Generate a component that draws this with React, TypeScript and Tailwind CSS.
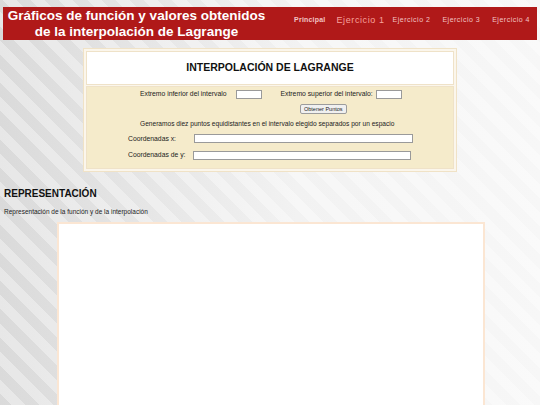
import React from "react";

export default function App() {
  return (
    <div className="w-[540px] min-h-[405px] overflow-hidden font-['Liberation_Sans',Arial,sans-serif] bg-[image:repeating-linear-gradient(45deg,rgba(255,255,255,0.35)_0_10px,transparent_10px_20px),linear-gradient(to_right,#dadada,#f2f2f2_55%,#f7f7f7)] pt-[7px] whitespace-nowrap">
      <header className="mx-[3px] h-[33px] bg-[#b01919] flex justify-between">
        <div className="w-[267px] flex-none text-center text-white font-bold text-[13.5px] leading-[16px] pt-[1px]">
          <div>Gráficos de función y valores obtenidos</div>
          <div>de la interpolación de Lagrange</div>
        </div>
        <nav className="flex items-start pt-[7px] pr-[7px]">
          <span className="text-[7px] leading-[10px] font-bold text-[#f2c4c4] mt-[1px] tracking-[0.2px]">Principal</span>
          <span className="text-[9px] leading-[12px] text-[#f8a39b] ml-[11px] tracking-[0.6px]">Ejercicio 1</span>
          <span className="text-[7px] leading-[10px] text-[#f2c4c4] ml-[8px] mt-[1px] tracking-[0.5px]">Ejercicio 2</span>
          <span className="text-[7px] leading-[10px] text-[#f2c4c4] ml-[12px] mt-[1px] tracking-[0.5px]">Ejercicio 3</span>
          <span className="text-[7px] leading-[10px] text-[#f2c4c4] ml-[12px] mt-[1px] tracking-[0.5px]">Ejercicio 4</span>
        </nav>
      </header>

      <section className="mx-auto mt-[8px] w-[374px] border border-[#f0e2c6] bg-[#fbf6ec] p-[2px]">
        <div className="h-[34px] bg-white border border-[#efe2c8] flex items-center justify-center">
          <h1 className="text-[10.5px] font-bold text-[#111]">INTERPOLACIÓN DE LAGRANGE</h1>
        </div>
        <div className="mt-[1px] bg-[#f5ebcb] border border-[#efe2c8] pb-[8px] text-[6.8px] text-[#222]">
          <div className="flex items-center pt-[2px] h-[13px]">
            <span className="ml-[53px]">Extremo inferior del intervalo</span>
            <span className="ml-[9px] inline-block w-[26px] h-[9px] bg-white border border-[#9a9a9a]"></span>
            <span className="ml-[19px]">Extremo superior del intervalo:</span>
            <span className="ml-[3px] inline-block w-[26px] h-[9px] bg-white border border-[#9a9a9a]"></span>
          </div>
          <div className="flex mt-[4px]">
            <button className="ml-[213px] h-[10px] px-[3px] bg-[#f0f0f0] border border-[#9c9c9c] rounded-[2px] text-[5.5px] leading-[8px] text-[#222]">
              Obtener Puntos
            </button>
          </div>
          <div className="mt-[5px] ml-[53px] text-[6.6px]">Generamos diez puntos equidistantes en el intervalo elegido separados por un espacio</div>
          <div className="flex items-center mt-[5px]">
            <span className="ml-[41px] w-[66px]">Coordenadas x:</span>
            <span className="inline-block w-[219px] h-[9px] bg-white border border-[#9a9a9a]"></span>
          </div>
          <div className="flex items-center mt-[6px]">
            <span className="ml-[41px] w-[65px]">Coordenadas de y:</span>
            <span className="inline-block w-[218px] h-[9px] bg-white border border-[#9a9a9a]"></span>
          </div>
        </div>
      </section>

      <h2 className="ml-[4px] mt-[15px] text-[10px] font-bold text-[#111] leading-[13px]">REPRESENTACIÓN</h2>
      <p className="ml-[4px] mt-[8px] text-[6.5px] text-[#222] leading-[8px]">Representación de la función y de la interpolación</p>
      <div className="ml-[57px] mt-[6px] w-[428px] h-[200px] bg-white border-2 border-[#fbe6d3]"></div>
    </div>
  );
}
